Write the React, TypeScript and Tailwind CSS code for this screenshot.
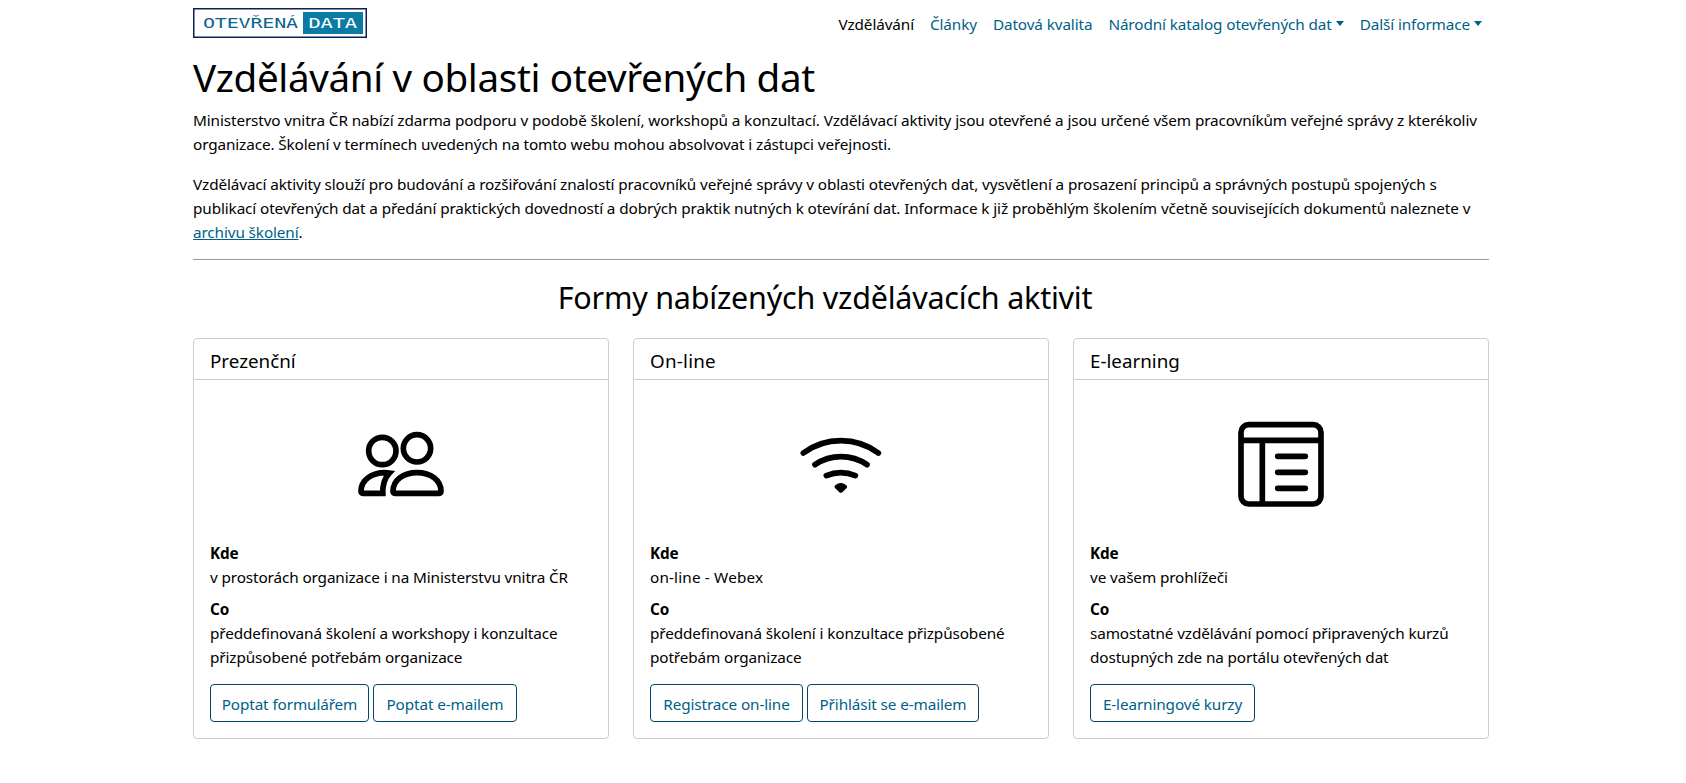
import type { ReactNode } from 'react';

function Logo() {
  return (
    <svg className="block" width="174" height="30" viewBox="0 0 174 30" role="img" aria-label="Otevřená data">
      <rect x="0.75" y="0.75" width="172.5" height="28.5" fill="#fff" stroke="#0b1f52" strokeWidth="1.5" />
      <rect x="110" y="4" width="60" height="22" fill="#0a7ba5" />
      <g fontFamily="'DejaVu Sans Mono', monospace" fontSize="13.5">
        <text x="10" y="19.8" textLength="95" lengthAdjust="spacingAndGlyphs" fill="#0a6595">
          OTEVŘENÁ
        </text>
        <text x="115.5" y="19.8" textLength="48.5" lengthAdjust="spacingAndGlyphs" fill="#fff">
          DATA
        </text>
      </g>
    </svg>
  );
}

function Caret() {
  return <span className="ml-1 mb-[4px] inline-block border-x-[4.8px] border-t-[5px] border-x-transparent border-t-current align-middle" />;
}

function IconFrame({ children }: { children: ReactNode }) {
  return (
    <svg className="mx-auto block" width="96" height="96" viewBox="519 258 288 288" fill="none" stroke="#000" strokeWidth="17">
      {children}
    </svg>
  );
}

const peopleIcon = (
  <IconFrame>
    <circle cx="607" cy="363" r="41" />
    <circle cx="711" cy="355" r="41" />
    <path d="M639 484C639 450 670 428 711 428S783 450 783 484Q783 490 777 490H645Q639 490 639 484Z" />
    <path d="M617 490H549Q543 490 543 484C543 450 575 428 615 428Q620 428 628 429C614 444 608 465 608 490" />
  </IconFrame>
);

const wifiIcon = (
  <IconFrame>
    <path strokeLinecap="round" d="M550 369A189.5 189.5 0 0 1 775 369M585 404A138.7 138.7 0 0 1 741 404M619 437A109.6 109.6 0 0 1 706 437" />
    <path fill="#000" stroke="none" d="M646 466Q662 452 679 466Q684 470 680 474L667 487Q662 490 658 487L645 474Q641 470 646 466Z" />
  </IconFrame>
);

const courseIcon = (
  <IconFrame>
    <rect x="543" y="284" width="240" height="238" rx="23" />
    <path d="M543 331H783M607 331V522" />
    <path strokeLinecap="round" d="M653 379H736M653 427H736M653 475H736" />
  </IconFrame>
);

const cards = [
  {
    title: 'Prezenční',
    titleTracking: 'tracking-normal',
    icon: peopleIcon,
    where: 'v prostorách organizace i na Ministerstvu vnitra ČR',
    whereTracking: '',
    what: ['předdefinovaná školení a workshopy i konzultace', 'přizpůsobené potřebám organizace'],
    buttons: [
      { label: 'Poptat formulářem', width: 'w-[159px]' },
      { label: 'Poptat e-mailem', width: 'w-[144px]' },
    ],
  },
  {
    title: 'On-line',
    titleTracking: 'tracking-[0.25px]',
    icon: wifiIcon,
    where: 'on-line - Webex',
    whereTracking: 'tracking-[0.16px]',
    what: ['předdefinovaná školení i konzultace přizpůsobené', 'potřebám organizace'],
    buttons: [
      { label: 'Registrace on-line', width: 'w-[153px]' },
      { label: 'Přihlásit se e-mailem', width: 'w-[172px]' },
    ],
  },
  {
    title: 'E-learning',
    titleTracking: 'tracking-normal',
    icon: courseIcon,
    where: 've vašem prohlížeči',
    whereTracking: '',
    what: ['samostatné vzdělávání pomocí připravených kurzů', 'dostupných zde na portálu otevřených dat'],
    buttons: [{ label: 'E-learningové kurzy', width: 'w-[165px]' }],
  },
];

export default function App() {
  return (
    <div className="min-h-[783px] bg-white font-['Noto_Sans',sans-serif] text-[15.3px] leading-6 tracking-[-0.115px] text-black">
      <div className="ml-[181px] w-[1320px] px-3">
        <header className="flex h-[53px] items-start justify-between pt-2">
          <a href="#"><Logo /></a>
          <nav className="flex gap-4 whitespace-nowrap pt-1 pr-[7px] text-[#005f87]">
            <a href="#" className="text-black">Vzdělávání</a>
            <a href="#">Články</a>
            <a href="#">Datová kvalita</a>
            <a href="#">Národní katalog otevřených dat<Caret /></a>
            <a href="#">Další informace<Caret /></a>
          </nav>
        </header>

        <main>
          <h1 className="h-[55px] whitespace-nowrap text-[38.6px] leading-[48px] tracking-[-0.35px]">Vzdělávání v oblasti otevřených dat</h1>
          <p className="whitespace-nowrap">
            Ministerstvo vnitra ČR nabízí zdarma podporu v podobě školení, workshopů a konzultací. Vzdělávací aktivity jsou otevřené a jsou určené všem pracovníkům veřejné správy z kterékoliv
            <br />
            organizace. Školení v termínech uvedených na tomto webu mohou absolvovat i zástupci veřejnosti.
          </p>
          <p className="mt-4 whitespace-nowrap">
            Vzdělávací aktivity slouží pro budování a rozšiřování znalostí pracovníků veřejné správy v oblasti otevřených dat, vysvětlení a prosazení principů a správných postupů spojených s
            <br />
            publikací otevřených dat a předání praktických dovedností a dobrých praktik nutných k otevírání dat. Informace k již proběhlým školením včetně souvisejících dokumentů naleznete v
            <br />
            <a href="#" className="text-[#005f87] underline">archivu školení</a>.
          </p>
          <hr className="mt-[15px] border-[#9b9b9b]" />

          <h2 className="mt-[18px] mb-[22px] pr-[32px] text-center text-[30.5px] leading-[38px] tracking-[-0.22px]">Formy nabízených vzdělávacích aktivit</h2>

          <div className="grid grid-cols-3 gap-6">
            {cards.map((card) => (
              <section key={card.title} className="h-[401px] rounded border border-[#cccccc]">
                <h3 className={`${card.titleTracking} h-[41px] border-b border-[#cccccc] px-4 pt-[10px] text-[18.8px]`}>{card.title}</h3>
                <div className="px-4 pt-9">
                  {card.icon}
                  <dl className="mt-[29px] whitespace-nowrap">
                    <dt className="font-bold">Kde</dt>
                    <dd className={`${card.whereTracking} mb-2`}>{card.where}</dd>
                    <dt className="font-bold">Co</dt>
                    <dd>{card.what[0]}<br />{card.what[1]}</dd>
                  </dl>
                  <div className="mt-[15px] flex gap-1">
                    {card.buttons.map((button) => (
                      <button key={button.label} className={`${button.width} h-[38px] whitespace-nowrap rounded border border-[#00446b] pt-px text-[#005f87]`}>
                        {button.label}
                      </button>
                    ))}
                  </div>
                </div>
              </section>
            ))}
          </div>
        </main>
      </div>
    </div>
  );
}
